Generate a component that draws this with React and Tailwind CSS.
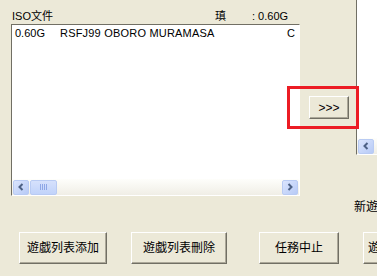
import React from 'react';

const cjk = "font-['Liberation_Sans','Noto_Sans_CJK_SC',sans-serif]";

function ArrowBtn({ dir }) {
  return (
    <div className="flex h-[15px] w-[16px] shrink-0 items-center justify-center rounded-[2px] border border-[#b9cbf3] bg-gradient-to-br from-[#dbe5fd] to-[#b7caf6]">
      <svg width="8" height="8" viewBox="0 0 8 8">
        {dir === 'left' ? (
          <path d="M5.5 1 L2.5 4 L5.5 7" fill="none" stroke="#4d6185" strokeWidth="2" />
        ) : (
          <path d="M2.5 1 L5.5 4 L2.5 7" fill="none" stroke="#4d6185" strokeWidth="2" />
        )}
      </svg>
    </div>
  );
}

function HScrollbar({ thumb = true, right = true }) {
  return (
    <div className="flex h-[16px] shrink-0 items-center gap-[1px] bg-gradient-to-b from-[#fefefb] to-[#f0eee6] px-[1px]">
      <ArrowBtn dir="left" />
      {thumb && (
        <div className="flex h-[15px] w-[27px] items-center justify-center gap-[1px] rounded-[2px] border border-[#b9cbf3] bg-gradient-to-b from-[#d6e1fc] to-[#c1d3fa]">
          <span className="h-[6px] w-[1px] bg-[#8ea6e6]" />
          <span className="h-[6px] w-[1px] bg-[#8ea6e6]" />
          <span className="h-[6px] w-[1px] bg-[#8ea6e6]" />
          <span className="h-[6px] w-[1px] bg-[#8ea6e6]" />
        </div>
      )}
      <div className="flex-1" />
      {right && <ArrowBtn dir="right" />}
    </div>
  );
}

function XpButton({ children, className = '' }) {
  return (
    <div
      className={`flex shrink-0 items-center justify-center whitespace-nowrap border border-t-white border-l-white border-b-[#716f64] border-r-[#716f64] bg-[#ece9d8] shadow-[inset_-1px_-1px_0_#aca899] text-[12px] leading-[14px] text-black ${className}`}
    >
      {children}
    </div>
  );
}

export default function App() {
  return (
    <div className={`relative h-[276px] w-[377px] overflow-hidden bg-[#ece9d8] text-black ${cjk}`}>
      <div className="flex h-[196px]">
        <div className="flex w-[300px] flex-col pl-[11px] pt-[8px]">
          <div className="flex h-[16px] items-center text-[11px] leading-[16px]">
            <span className="w-[204px] pl-[1px]">ISO文件</span>
            <span className="w-[37px]">瑱</span>
            <span>: 0.60G</span>
          </div>
          <div className="flex h-[172px] w-[289px] flex-col border border-t-[#716f64] border-l-[#716f64] border-b-white border-r-white">
            <div className="flex-1 bg-white pl-[3px] pt-[2px]">
              <div className="flex text-[11px] leading-[13px]">
                <span className="w-[45px]">0.60G</span>
                <span className="tracking-[0.2px]">RSFJ99 OBORO MURAMASA</span>
                <span className="ml-auto pr-[4px]">C</span>
              </div>
            </div>
            <HScrollbar />
          </div>
        </div>
        <div className="w-[56px] shrink-0">
          <XpButton className="ml-[9px] mt-[96px] h-[23px] w-[40px] font-['Liberation_Sans',sans-serif] text-[11px]">
            &gt;&gt;&gt;
          </XpButton>
        </div>
        <div className="flex h-[155px] w-[21px] shrink-0 flex-col border-l border-b border-l-[#716f64] border-b-white bg-white">
          <div className="flex-1" />
          <HScrollbar thumb={false} right={false} />
        </div>
      </div>
      <div className="h-[36px] whitespace-nowrap pl-[354px] pt-[5px] text-[12px] leading-[13px]">新遊</div>
      <div className="flex">
        <XpButton className="ml-[19px] h-[32px] w-[88px]">遊戯列表添加</XpButton>
        <XpButton className="ml-[24px] h-[32px] w-[96px]">遊戯列表刪除</XpButton>
        <XpButton className="ml-[32px] h-[32px] w-[80px]">任務中止</XpButton>
        <XpButton className="ml-[24px] h-[32px] w-[80px] justify-start pl-[4px]">遊戯</XpButton>
      </div>
      <div className="absolute left-[287px] top-[86px] h-[43px] w-[72px] border-[3px] border-[#ec1c24]" />
    </div>
  );
}
